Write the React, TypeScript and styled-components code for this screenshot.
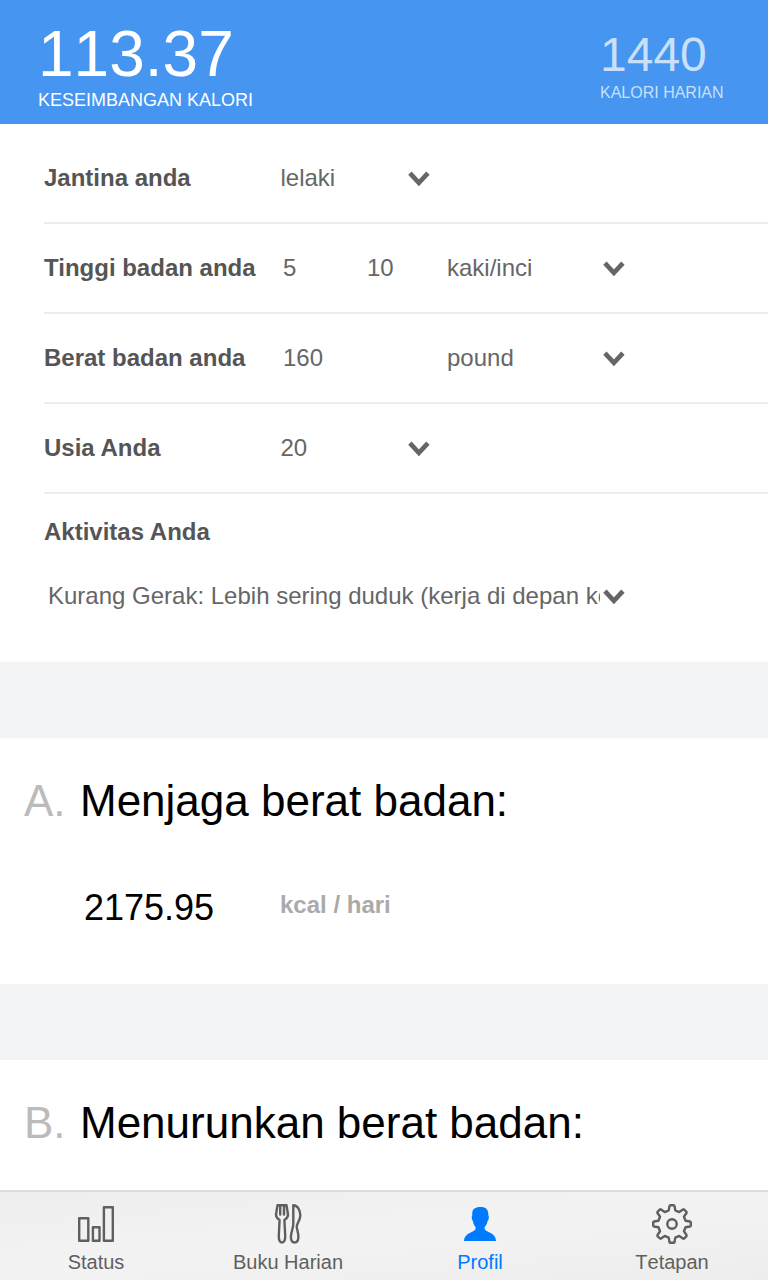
import React from "react";
import styled, { createGlobalStyle } from "styled-components";

const GlobalStyle = createGlobalStyle`
  * { box-sizing: border-box; }
  body { margin: 0; background: #fff; font-family: "Liberation Sans", Arial, sans-serif; }
`;

const Screen = styled.div`
  width: 768px;
  height: 1280px;
  display: flex;
  flex-direction: column;
  overflow: hidden;
  background: #fff;
`;

const Header = styled.header`
  flex: none;
  height: 124px;
  display: flex;
  justify-content: space-between;
  padding: 0 44px 0 38px;
  background: #4595f1;
  color: #fff;
  white-space: nowrap;
`;

const Balance = styled.div`
  padding-top: 18px;
`;

const Daily = styled.div`
  flex: none;
  width: 124px;
  padding-top: 27px;
  color: #c9e0fb;
`;

const Figure = styled.div<{ $size: number; $line: number }>`
  font-size: ${(p) => p.$size}px;
  line-height: ${(p) => p.$line}px;
  font-kerning: none;
`;

const Caption = styled.div<{ $size: number }>`
  font-size: ${(p) => p.$size}px;
  line-height: 20px;
`;

const Form = styled.section`
  flex: none;
  height: 538px;
  padding: 10px 0 0 44px;
  color: #666;
  font-size: 24px;
`;

const Row = styled.div`
  height: 90px;
  display: flex;
  align-items: center;
  border-bottom: 2px solid #ededed;
`;

const Label = styled.div`
  width: 236px;
  flex: none;
  color: #555;
  font-weight: bold;
  white-space: nowrap;
`;

const Field = styled.div<{ $width: number; $indent?: number }>`
  width: ${(p) => p.$width}px;
  padding-left: ${(p) => p.$indent ?? 0}px;
  flex: none;
  overflow: hidden;
  white-space: nowrap;
`;

const Activity = styled.div`
  padding-top: 18px;
`;

const ActivityLabel = styled(Label)`
  line-height: 40px;
`;

const ActivitySelect = styled.div`
  height: 88px;
  display: flex;
  align-items: center;
  gap: 3px;
  padding-left: 4px;
`;

const Divider = styled.div`
  flex: none;
  height: 76px;
  background: #f2f3f5;
`;

const Goal = styled.section<{ $height: number }>`
  flex: none;
  height: ${(p) => p.$height}px;
  padding: 37px 0 0 24px;
`;

const GoalTitle = styled.h2`
  margin: 0;
  display: flex;
  font-size: 44px;
  line-height: 52px;
  font-weight: normal;
  color: #000;
  white-space: nowrap;
`;

const Letter = styled.span`
  width: 56px;
  color: #bbb;
`;

const Result = styled.div`
  display: flex;
  align-items: flex-start;
  padding: 60px 0 0 60px;
`;

const Amount = styled.div`
  width: 196px;
  font-size: 36px;
  line-height: 42px;
`;

const Unit = styled.div`
  font-size: 24px;
  font-weight: bold;
  color: #aaa;
  line-height: 36px;
`;

const TabBar = styled.nav`
  flex: none;
  height: 90px;
  display: flex;
  border-top: 2px solid #dcdcdc;
  background: linear-gradient(175deg, #eeeeee, #f3f3f3 50%, #ededed);
`;

const Tab = styled.div<{ $active?: boolean }>`
  flex: 1;
  display: flex;
  flex-direction: column;
  align-items: center;
  padding-top: 10px;
  color: ${(p) => (p.$active ? "#007aff" : "#5f5f5f")};
  font-size: 20px;
  font-kerning: none;
  line-height: 24px;
  white-space: nowrap;
`;

const TabIcon = styled.svg`
  width: 44px;
  height: 44px;
  margin-bottom: 4px;
  fill: none;
  stroke: currentColor;
  stroke-width: 2.4;
  stroke-linejoin: round;
  stroke-linecap: round;
`;

const ArrowIcon = styled.svg`
  flex: none;
  width: 22px;
  height: 16px;
  margin-top: 1px;
  fill: none;
  stroke: #666;
  stroke-width: 4.7;
`;

const Arrow = () => (
  <ArrowIcon viewBox="0 0 22 16">
    <path d="M1.900 2.200 10.900 11.800 19.900 2.200" />
  </ArrowIcon>
);

// Eight narrow teeth around a hub, joined by shallow curved valleys.
const gearPath = (() => {
  const point = (radius: number, angle: number, side: number) => {
    const x = 22 + radius * Math.cos(angle) - side * Math.sin(angle);
    const y = 22 + radius * Math.sin(angle) + side * Math.cos(angle);
    return `${x.toFixed(2)} ${y.toFixed(2)}`;
  };
  let path = "";
  for (let i = 0; i < 8; i++) {
    const angle = (i * Math.PI) / 4;
    path += `${i ? "L" : "M"}${point(13.6, angle, -3.3)}L${point(18, angle, -2.5)}`;
    path += `Q${point(18.8, angle, -2.4)} ${point(18.8, angle, -1.4)}L${point(18.8, angle, 1.4)}`;
    path += `Q${point(18.8, angle, 2.4)} ${point(18, angle, 2.5)}L${point(13.6, angle, 3.3)}`;
  }
  return path + "Z";
})();

export default function App() {
  return (
    <Screen>
      <GlobalStyle />
      <Header>
        <Balance>
          <Figure $size={64} $line={72}>113.37</Figure>
          <Caption $size={18}>KESEIMBANGAN KALORI</Caption>
        </Balance>
        <Daily>
          <Figure $size={48} $line={56}>1440</Figure>
          <Caption $size={16}>KALORI HARIAN</Caption>
        </Daily>
      </Header>

      <Form>
        <Row>
          <Label>Jantina anda</Label>
          <Field $width={128} $indent={0.5}>lelaki</Field>
          <Arrow />
        </Row>
        <Row>
          <Label>Tinggi badan anda</Label>
          <Field $width={84} $indent={3}>5</Field>
          <Field $width={83} $indent={3}>10</Field>
          <Field $width={155.5}>kaki/inci</Field>
          <Arrow />
        </Row>
        <Row>
          <Label>Berat badan anda</Label>
          <Field $width={167} $indent={3}>160</Field>
          <Field $width={155.5}>pound</Field>
          <Arrow />
        </Row>
        <Row>
          <Label>Usia Anda</Label>
          <Field $width={128} $indent={0.5}>20</Field>
          <Arrow />
        </Row>
        <Activity>
          <ActivityLabel>Aktivitas Anda</ActivityLabel>
          <ActivitySelect>
            <Field $width={552}>Kurang Gerak: Lebih sering duduk (kerja di depan komputer)</Field>
            <Arrow />
          </ActivitySelect>
        </Activity>
      </Form>

      <Divider />
      <Goal $height={246}>
        <GoalTitle><Letter>A.</Letter>Menjaga berat badan:</GoalTitle>
        <Result>
          <Amount>2175.95</Amount>
          <Unit>kcal / hari</Unit>
        </Result>
      </Goal>
      <Divider />
      <Goal $height={130}>
        <GoalTitle><Letter>B.</Letter>Menurunkan berat badan:</GoalTitle>
      </Goal>

      <TabBar>
        <Tab>
          <TabIcon viewBox="0 0 44 44">
            <path d="M5.200 16.200h9.100v22.600H5.200zM18.900 25.200h6.600v13.600h-6.600zM29.900 5.200h8.900v33.600h-8.900z" />
          </TabIcon>
          Status
        </Tab>
        <Tab>
          <TabIcon viewBox="0 0 44 44">
            <path d="M11.500 3.200H20.500L22 12.500q0 3.300-3.600 5.500l.8 15.500q.2 7-3.200 7t-3.200-7l.8-15.500Q10 15.800 10 12.500zM14.200 3.500v9M18 3.500v9" />
            <path d="M27.300 3.300C31.500 3.500 34.300 8 34.300 13.500 34.300 18 31 21 30.700 24.500 31 28 32.400 31 32.400 34.500q0 6-3.800 6t-3.700-6C24.900 31 27 27 27.300 22z" />
          </TabIcon>
          Buku Harian
        </Tab>
        <Tab $active>
          <TabIcon viewBox="0 0 44 44">
            <path
              stroke="none"
              fill="currentColor"
              d="M22.500 5C28 5 30.600 7.500 30.400 13.500 31.300 14.300 30.900 18.200 29.600 18.800 29.200 21.500 28.300 23.500 26.600 25V27C28.500 30.500 38 31 38 39H6C6 31 16 30.500 17.600 27V25C16 23.500 15.200 21.500 14.900 18.800 13.700 18.200 13.400 14.300 14.300 13.500 14 9 15 7 17.200 6.200 18.500 5.400 20.200 5 22.500 5z"
            />
          </TabIcon>
          Profil
        </Tab>
        <Tab>
          <TabIcon viewBox="0 0 44 44">
            <path d={gearPath} />
            <circle cx="22" cy="22" r="4.700" />
          </TabIcon>
          Tetapan
        </Tab>
      </TabBar>
    </Screen>
  );
}
